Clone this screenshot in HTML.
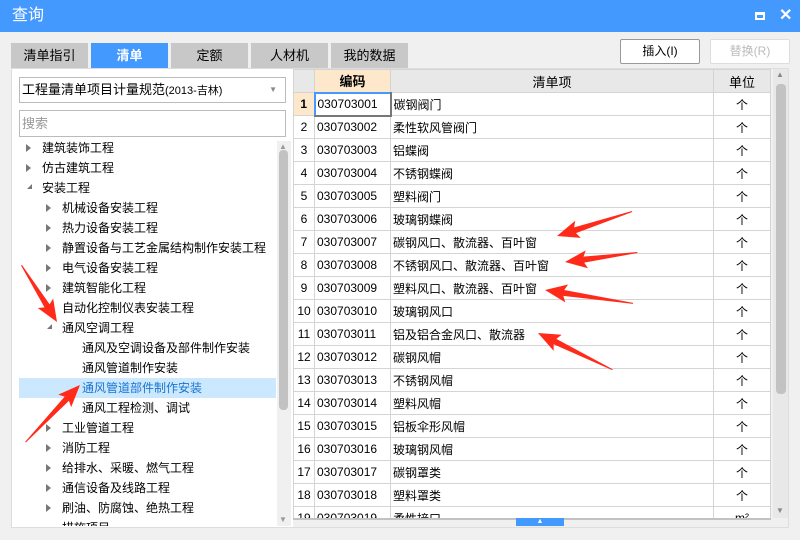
<!DOCTYPE html>
<html><head><meta charset="utf-8"><style>
*{margin:0;padding:0;box-sizing:border-box}
body{width:800px;height:540px;background:#f0f0f0;font-family:"Liberation Sans","Noto Sans CJK SC",sans-serif;font-size:12px;color:#000;position:relative;overflow:hidden}
.a{position:absolute}
.title{left:0;top:0;width:800px;height:32px;background:#4499ff;color:#fff;font-size:16px;line-height:32px;padding-left:12px}
.tab{top:43px;height:25px;background:#c8c8c8;line-height:25px;text-align:center;font-size:13px}
.btn{top:39px;height:25px;border:1px solid #adadad;background:#fff;border-radius:2px;text-align:center;line-height:23px;font-size:12px}
.tree div{position:absolute;height:20px;line-height:20px;font-size:12px;white-space:nowrap}
.tri{position:absolute;width:0;height:0;border-top:4px solid transparent;border-bottom:4px solid transparent;border-left:5px solid #777}
table{border-collapse:collapse;position:absolute;left:293px;top:69px;table-layout:fixed}
td{border:1px solid #d4d4d4;height:23px;font-size:12px;padding:0 2px;white-space:nowrap;overflow:hidden;background:#fff}
td.n{background:#fff;text-align:center;font-size:12px}
td.u{text-align:center;font-size:12px}
td.i{font-size:12px}
th{height:23px;background:#e8e8e8;border:1px solid #d4d4d4;font-weight:normal;font-size:12px}
</style></head><body>
<div class="a title">查询</div>
<div class="a" style="left:755px;top:12px;width:10px;height:8px;border:2px solid #fff;border-top-width:3px"></div>
<div class="a" style="left:779px;top:5px;color:#fff;font-size:16px;font-weight:bold">✕</div>

<div class="a tab" style="left:11px;width:77px">清单指引</div>
<div class="a tab" style="left:91px;width:77px;background:#4499ff;color:#fff;font-weight:bold">清单</div>
<div class="a tab" style="left:171px;width:77px">定额</div>
<div class="a tab" style="left:251px;width:77px">人材机</div>
<div class="a tab" style="left:331px;width:77px">我的数据</div>
<div class="a btn" style="left:620px;width:80px;border-color:#999">插入(I)</div>
<div class="a btn" style="left:710px;width:80px;color:#bbb;border-color:#ddd">替换(R)</div>

<div class="a" style="left:11px;top:68px;width:283px;height:460px;background:#fff;border:1px solid #ddd"></div>
<div class="a" style="left:19px;top:77px;width:267px;height:26px;border:1px solid #bbb;line-height:24px;padding-left:2px;font-size:13px">工程量清单项目计量规范<span style="font-size:11px">(2013-吉林)</span><span style="position:absolute;right:8px;top:0;color:#888;font-size:8px">▼</span></div>
<div class="a" style="left:19px;top:110px;width:267px;height:27px;border:1px solid #bbb;line-height:25px;padding-left:2px;color:#999;font-size:13px">搜索</div>
<div class="a" style="left:277px;top:141px;width:14px;height:385px;background:#f0f0f0"></div>
<div class="a" style="left:279px;top:150px;width:9px;height:260px;background:#c2c2c2;border-radius:4px"></div>
<div class="a" style="left:279px;top:142px;color:#999;font-size:8px">▲</div>
<div class="a" style="left:279px;top:515px;color:#999;font-size:8px">▼</div>

<div class="a" style="left:19px;top:378px;width:257px;height:20px;background:#cce8ff"></div>
<div class="tree">
<span class="tri" style="left:26px;top:144px"></span><div style="left:42px;top:138px">建筑装饰工程</div>
<span class="tri" style="left:26px;top:164px"></span><div style="left:42px;top:158px">仿古建筑工程</div>
<span class="a" style="left:27px;top:184px;width:0;height:0;border-left:5px solid transparent;border-bottom:5px solid #777"></span><div style="left:42px;top:178px">安装工程</div>
<span class="tri" style="left:46px;top:204px"></span><div style="left:62px;top:198px">机械设备安装工程</div>
<span class="tri" style="left:46px;top:224px"></span><div style="left:62px;top:218px">热力设备安装工程</div>
<span class="tri" style="left:46px;top:244px"></span><div style="left:62px;top:238px">静置设备与工艺金属结构制作安装工程</div>
<span class="tri" style="left:46px;top:264px"></span><div style="left:62px;top:258px">电气设备安装工程</div>
<span class="tri" style="left:46px;top:284px"></span><div style="left:62px;top:278px">建筑智能化工程</div>
<span class="tri" style="left:46px;top:304px"></span><div style="left:62px;top:298px">自动化控制仪表安装工程</div>
<span class="a" style="left:47px;top:324px;width:0;height:0;border-left:5px solid transparent;border-bottom:5px solid #777"></span><div style="left:62px;top:318px">通风空调工程</div>
<div style="left:82px;top:338px">通风及空调设备及部件制作安装</div>
<div style="left:82px;top:358px">通风管道制作安装</div>
<div style="left:82px;top:378px;color:#1874d0">通风管道部件制作安装</div>
<div style="left:82px;top:398px">通风工程检测、调试</div>
<span class="tri" style="left:46px;top:424px"></span><div style="left:62px;top:418px">工业管道工程</div>
<span class="tri" style="left:46px;top:444px"></span><div style="left:62px;top:438px">消防工程</div>
<span class="tri" style="left:46px;top:464px"></span><div style="left:62px;top:458px">给排水、采暖、燃气工程</div>
<span class="tri" style="left:46px;top:484px"></span><div style="left:62px;top:478px">通信设备及线路工程</div>
<span class="tri" style="left:46px;top:504px"></span><div style="left:62px;top:498px">刷油、防腐蚀、绝热工程</div>
<div style="left:62px;top:518px;height:8px;overflow:hidden;line-height:20px">措施项目</div>
</div>

<div class="a" style="left:293px;top:68px;width:496px;height:460px;background:#f0f0f0;border:1px solid #ddd"></div>
<div class="a" style="left:293px;top:69px;width:478px;height:449px;overflow:hidden">
<table style="left:0;top:0">
<colgroup><col style="width:21px"><col style="width:76px"><col style="width:323px"><col style="width:57px"></colgroup>
<tr><th style="background:#e8e8e8"></th><th style="background:#fde8cc;font-weight:bold;font-size:13px">编码</th><th style="font-size:13px">清单项</th><th style="font-size:13px">单位</th></tr>
<tr><td class="n" style="background:#fde8cc;font-weight:bold">1</td><td style="border:2px solid #777;border-left-color:#4499ff;border-top-color:#4499ff">030703001</td><td class="i">碳钢阀门</td><td class="u">个</td></tr>
<tr><td class="n">2</td><td>030703002</td><td class="i">柔性软风管阀门</td><td class="u">个</td></tr>
<tr><td class="n">3</td><td>030703003</td><td class="i">铝蝶阀</td><td class="u">个</td></tr>
<tr><td class="n">4</td><td>030703004</td><td class="i">不锈钢蝶阀</td><td class="u">个</td></tr>
<tr><td class="n">5</td><td>030703005</td><td class="i">塑料阀门</td><td class="u">个</td></tr>
<tr><td class="n">6</td><td>030703006</td><td class="i">玻璃钢蝶阀</td><td class="u">个</td></tr>
<tr><td class="n">7</td><td>030703007</td><td class="i">碳钢风口、散流器、百叶窗</td><td class="u">个</td></tr>
<tr><td class="n">8</td><td>030703008</td><td class="i">不锈钢风口、散流器、百叶窗</td><td class="u">个</td></tr>
<tr><td class="n">9</td><td>030703009</td><td class="i">塑料风口、散流器、百叶窗</td><td class="u">个</td></tr>
<tr><td class="n">10</td><td>030703010</td><td class="i">玻璃钢风口</td><td class="u">个</td></tr>
<tr><td class="n">11</td><td>030703011</td><td class="i">铝及铝合金风口、散流器</td><td class="u">个</td></tr>
<tr><td class="n">12</td><td>030703012</td><td class="i">碳钢风帽</td><td class="u">个</td></tr>
<tr><td class="n">13</td><td>030703013</td><td class="i">不锈钢风帽</td><td class="u">个</td></tr>
<tr><td class="n">14</td><td>030703014</td><td class="i">塑料风帽</td><td class="u">个</td></tr>
<tr><td class="n">15</td><td>030703015</td><td class="i">铝板伞形风帽</td><td class="u">个</td></tr>
<tr><td class="n">16</td><td>030703016</td><td class="i">玻璃钢风帽</td><td class="u">个</td></tr>
<tr><td class="n">17</td><td>030703017</td><td class="i">碳钢罩类</td><td class="u">个</td></tr>
<tr><td class="n">18</td><td>030703018</td><td class="i">塑料罩类</td><td class="u">个</td></tr>
<tr><td class="n">19</td><td>030703019</td><td class="i">柔性接口</td><td class="u">m²</td></tr>
</table>
</div>
<div class="a" style="left:293px;top:518px;width:478px;height:9px;background:#f0f0f0;border-top:2px solid #c2c2c2"></div>
<div class="a" style="left:516px;top:518px;width:48px;height:8px;background:#4499ff;color:#fff;font-size:7px;text-align:center;line-height:8px">▲</div>
<div class="a" style="left:773px;top:69px;width:15px;height:449px;background:#e8e8e8"></div>
<div class="a" style="left:776px;top:84px;width:10px;height:310px;background:#c2c2c2;border-radius:4px"></div>
<div class="a" style="left:776px;top:70px;color:#888;font-size:8px">▲</div>
<div class="a" style="left:776px;top:506px;color:#888;font-size:8px">▼</div>

<svg class="a" style="left:0;top:0" width="800" height="540">
<g fill="#ff2a1a">
<g transform="translate(557,236) rotate(-17.7)"><polygon points="0,0 22,-9 19,-3 79,-1 79,0 19,3 22,9"/></g>
<g transform="translate(565,262) rotate(-7.1)"><polygon points="0,0 22,-9 19,-3 73,-1 73,0 19,3 22,9"/></g>
<g transform="translate(545,290) rotate(9)"><polygon points="0,0 22,-9 19,-3 89,-1 89,0 19,3 22,9"/></g>
<g transform="translate(538,333) rotate(26.6)"><polygon points="0,0 22,-9 19,-3 83,-1 83,0 19,3 22,9"/></g>
<g transform="translate(57,322) rotate(-121.6)"><polygon points="0,0 22,-9 19,-3 67,-1 67,0 19,3 22,9"/></g>
<g transform="translate(80,385) rotate(134)"><polygon points="0,0 22,-9 19,-3 79,-1 79,0 19,3 22,9"/></g>
</g>
</svg>
</body></html>
